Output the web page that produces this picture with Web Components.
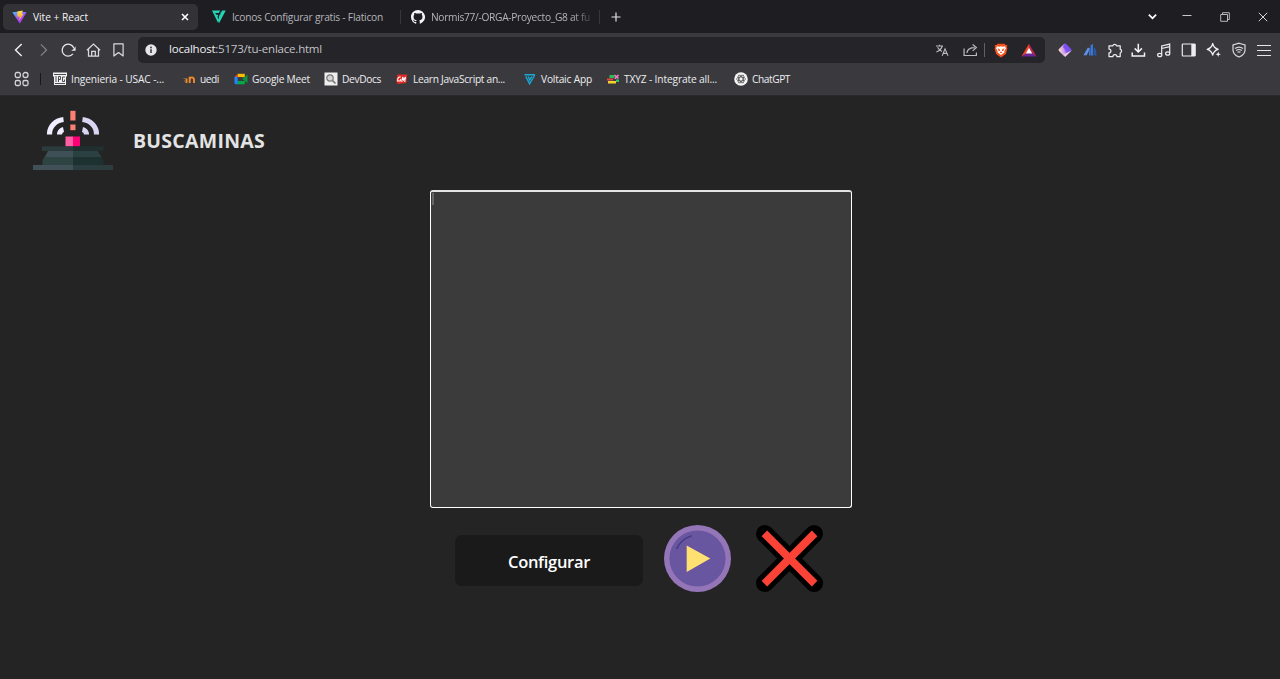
<!DOCTYPE html>
<html lang="es">
<head>
<meta charset="utf-8">
<title>Vite + React</title>
<style>
html,body{margin:0;height:100%;overflow:hidden;background:#242424}
body{font-family:"Open Sans","Noto Sans",sans-serif}
</style>
</head>
<body>
<browser-window></browser-window>
<script>
const ICONS = {
vite:['0 0 14 14','<defs><linearGradient id="a" x1="0" y1="0" x2=".6" y2="1"><stop offset="0" stop-color="#41c5ff"/><stop offset=".6" stop-color="#a450fa"/><stop offset="1" stop-color="#bd34fe"/></linearGradient><linearGradient id="b" x1="0" y1="0" x2="0" y2="1"><stop offset="0" stop-color="#ffe04a"/><stop offset="1" stop-color="#ff9a20"/></linearGradient></defs><path d="M.3 2.2 7 1.4l6.6.8L7.3 13.4z" fill="url(#a)"/><path d="M5 1.6 10 .5 9.3 4l1.4.1-4 6.3.4-3.9-2.2.3z" fill="url(#b)"/>'],
close:['0 0 10 10','<path d="M2 2l6 6M8 2L2 8" stroke="#fff" stroke-width="1.6"/>'],
flat:['0 0 14 14','<path d="M0 .5h8.3L6.8 3H3.2l1 1.8h2.1L5.5 7l1.5 3.2-.9 2.8zM10 .5h3.8L7 13.2 6.6 9z" fill="#25d3b5"/><path d="M9.2 1.3 6.6 7.6 8 8z" fill="#25d3b5"/>'],
github:['0 0 16 16','<path fill="#f4f4f6" d="M8 0C3.58 0 0 3.58 0 8c0 3.54 2.29 6.53 5.47 7.59.4.07.55-.17.55-.38v-1.49c-2.01.37-2.53-.49-2.69-.94-.09-.23-.48-.94-.82-1.13-.28-.15-.68-.52-.01-.53.63-.01 1.08.58 1.23.82.72 1.21 1.87.87 2.33.66.07-.52.28-.87.51-1.07-1.78-.2-3.64-.89-3.64-3.95 0-.87.31-1.59.82-2.15-.08-.2-.36-1.02.08-2.12 0 0 .67-.21 2.2.82a7.7 7.7 0 0 1 4 0c1.53-1.04 2.2-.82 2.2-.82.44 1.1.16 1.92.08 2.12.51.56.82 1.27.82 2.15 0 3.07-1.87 3.75-3.65 3.95.29.25.54.73.54 1.48v2.2c0 .21.15.46.55.38A8 8 0 0 0 8 0z"/>'],
plus:['0 0 10 10','<path d="M5 .5v9M.5 5h9" stroke="#e4e4e8" stroke-width="1.2"/>'],
chev:['0 0 10 10','<path d="M1.7 3.3 5 6.6l3.300-3.300" fill="none" stroke="#fff" stroke-width="1.6"/>'],
min:['0 0 10 10','<path d="M.5 3.500h9" stroke="#c8c8cc"/>'],
restore:['0 0 10 10','<path d="M.7 2.5h6.800v6.800H.7zM2.500 2.300V.7h6.800v6.800H7.700" fill="none" stroke="#c8c8cc" stroke-width=".9"/>'],
winclose:['0 0 10 10','<path d="M.8.800l8.400 8.400M9.200.800.800 9.200" stroke="#d8d8dc"/>'],
back:['0 0 16 16','<path d="M10.700 2 4.500 8l6.200 6" fill="none" stroke="#f0f0f2" stroke-width="1.400"/>'],
fwd:['0 0 16 16','<path d="M4.900 2.400 10.500 8l-5.600 5.600" fill="none" stroke="#808086" stroke-width="1.300"/>'],
reload:['0 0 16 16','<path d="M11.900 11.900A6 6 0 1 1 12.900 6.300" fill="none" stroke="#e8e8ea" stroke-width="1.300"/><path d="M14.600 4.300v4.500h-4.500c1.500-.8 3.200-2.200 4.500-4.500z" fill="#e8e8ea"/>'],
home:['0 0 16 16','<path d="M.900 8.200 7.500 2l6.600 6.200M2.500 7v7.200h10V7M5.700 14V9.300h3.600V14" fill="none" stroke="#dcdce0" stroke-width="1.250"/>'],
mark:['0 0 16 16','<path d="M2.900 1.800h9.200v12.200L7.500 10.500l-4.600 3.500z" fill="none" stroke="#dcdce0" stroke-width="1.200" stroke-linejoin="round"/>'],
info:['0 0 12 12','<circle cx="6" cy="6" r="5.700" fill="#e6e6ea"/><circle cx="6" cy="3.500" r=".9" fill="#333"/><path d="M6 5.300v3.600" stroke="#333" stroke-width="1.500"/>'],
trans:['0 0 14 14','<path d="M1 3h7M4.500 1.800V3M7.200 3.200C6.200 6 4 8 1.400 9M2.600 4.200C3.600 6.200 5.200 7.600 7 8.400M7.200 12.700 10 5.800l3 6.900M8.200 10.400h3.700" fill="none" stroke="#bcbcc2" stroke-width="1.100"/>'],
share:['0 0 14 14','<path d="M1 5.500v7h11.500V9.500M3.600 10C4 6.700 6.700 4.600 11 4.600M9 1.500l3.500 3.100L9 7.800" fill="none" stroke="#bcbcc2" stroke-width="1.100"/>'],
brave:['0 0 14 16','<path d="M3.500.8h7l1 1.200 1.800.2-.4 2 .5 1.600-1.500 6L7 15.400l-4.900-3.600-1.500-6 .5-1.600-.4-2L2.500 2z" fill="#f4511e"/><path d="M3 3.500 5.400 4 7 3.400l1.600.6 2.400-.5.9 2-1.600 3.400.3 1L7 12.800 3.400 9.900l.3-1L2.100 5.500z" fill="#fff"/><path d="m3.500 5.700 2 .8.7 1.800-1.300.5zM10.500 5.700l-2 .8-.7 1.800 1.300.5zM7 9l-1.400 1L7 11l1.400-1z" fill="#f4511e"/>'],
bat:['0 0 16 14','<path d="M8 .8 .4 13.400l5-2.600L8 5z" fill="#f2451f"/><path d="M8 .8 15.600 13.400l-5-2.600L8 5z" fill="#b5264f"/><path d="M.4 13.400h15.200l-5-3.100H5.400z" fill="#6b2499"/><path d="M8 4.800 11.200 10.600H4.800z" fill="#fff"/>'],
ext1:['0 0 16 16','<defs><linearGradient id="g" x1=".2" y1="1" x2=".8" y2="0"><stop offset="0" stop-color="#ffd9cf"/><stop offset=".4" stop-color="#c99be8"/><stop offset=".6" stop-color="#8a55f5"/><stop offset="1" stop-color="#6a45e8"/></linearGradient></defs><rect x="3" y="3" width="10" height="10" rx="1.500" transform="rotate(45 8 8)" fill="url(#g)"/><path d="M8 1.300 14.500 7.800 10 9.500 6 5z" fill="#7f4ff0"/><path d="M14.800 8.200 8.300 14.700 6.500 12.500z" fill="#e9c9e4"/>'],
ext2:['0 0 16 16','<path d="M1.500 13.300h3.200L8 6.500 5.900 5.500z" fill="#5c93e8"/><path d="M7 8.800 8.300 7v6.400H7z" fill="#3e75cf"/><path d="M8.600 3.200 10.900 2v11.400H8.600z" fill="#3b7ae0"/><path d="M11.600 5.500l1.500.8c.9 1.500 1.400 4 1.400 7.100h-2.900z" fill="#2857a4"/>'],
puzzle:['0 0 16 16','<path d="M2 3.800h3.800a2 2 0 0 1 3.800 0h3.600v3.400a2 2 0 0 1 0 3.800v3.500H9.900a2 2 0 0 0-4 0H2v-3.600a1.900 1.900 0 0 0 0-3.800z" fill="none" stroke="#eeeef0" stroke-width="1.250" stroke-linejoin="round"/>'],
down:['0 0 16 16','<path d="M7.300 1.700v8M3.700 6.400 7.300 10l3.600-3.600M1.200 10.500v3.500h12.300v-3.500" fill="none" stroke="#f4f4f6" stroke-width="1.500"/>'],
music:['0 0 16 16','<path d="M5.700 12.500V3.900l8-1.800v9M5.700 6.500l8-1.800" fill="none" stroke="#eeeef0" stroke-width="1.200"/><ellipse cx="3.700" cy="13" rx="2.100" ry="1.700" fill="none" stroke="#eeeef0" stroke-width="1.200"/><ellipse cx="11.700" cy="11.500" rx="2.100" ry="1.700" fill="none" stroke="#eeeef0" stroke-width="1.200"/>'],
side:['0 0 16 16','<rect x="1.300" y="2" width="12.800" height="12" rx=".8" fill="none" stroke="#eeeef0" stroke-width="1.200"/><path d="M10.300 2h4v12h-4z" fill="#eeeef0"/>'],
spark:['0 0 16 16','<path d="M6.700 1.500c.8 3.600 2.100 4.900 5.500 5.800-3.400.9-4.700 2.200-5.500 5.800C5.900 9.500 4.600 8.200 1.200 7.300 4.600 6.400 5.900 5.100 6.700 1.500z" fill="none" stroke="#f0f0f2" stroke-width="1.250" stroke-linejoin="round"/><path d="M12.200 9.500l.7 2 2 .7-2 .7-.7 2-.7-2-2-.7 2-.7z" fill="#f0f0f2"/>'],
vpn:['0 0 16 16','<path d="M8 1.200 14 3v5c0 3.200-2.400 5.600-6 7-3.600-1.400-6-3.800-6-7V3z" fill="none" stroke="#dcdce0" stroke-width="1.200"/><path d="M4 6.600q4-3 8 0M5.200 8.500q2.800-2 5.600 0M6.500 10.300q1.500-1 3 0" fill="none" stroke="#dcdce0" stroke-width="1.200"/>'],
menu:['0 0 16 16','<path d="M1 3.500h14M1 8.500h14M1 13.500h14" stroke="#e6e6ea" stroke-width="1.200"/>'],
apps:['0 0 16 16','<g fill="none" stroke="#d4d4d8" stroke-width="1.300"><rect x="1.300" y="1.500" width="5" height="5" rx="1.500"/><rect x="9" y="1.500" width="5" height="5" rx="2.300"/><rect x="1.300" y="9.500" width="5" height="5" rx="1.500"/><rect x="9" y="9.500" width="5" height="5" rx="1.500"/></g>'],
usac:['0 0 14 14','<path d="M0 .5h14v4h-1V13H1V4.500H0z" fill="#f2f2f2"/><path d="M1 2.500h12M3 4v6M5.500 10V4.500h2v3h-2M12 5H9.500v4.500h2v-2M2 11.500h10" fill="none" stroke="#3a3a3e" stroke-width=".9"/>'],
uedi:['0 0 14 14','<path d="M4.500 6.500V11M7.700 11V4.800M7.700 8c0-3.500 4.300-3.500 4.300 0v3" fill="none" stroke="#f18a2b" stroke-width="1.900"/><path d="M1.500 6.500H4M2 9h1.500" stroke="#8a6547"/>'],
meet:['0 0 14 14','<path d="M.5 5 3.800 1.800V5z" fill="#ea4335"/><path d="M3.800 1.800h7v3.400h-7z" fill="#fbbc04"/><path d="M.5 5h3.300v7.300H1.500l-1-1z" fill="#2684fc"/><path d="M3.800 9h7v3.300h-7z" fill="#00ac47"/><path d="M3.800 5.200h4.400V9H3.800z" fill="#3a3a3e"/><path d="M8.200 7 10.800 4.800 13.500 2.800v8.500L10.800 9z" fill="#0d9440"/>'],
devdocs:['0 0 14 14','<path d="M.5.500h13v13H.5z" fill="#eee"/><circle cx="6" cy="6" r="3.200" fill="#d4d4d4" stroke="#777" stroke-width="1.200"/><path d="m8.500 8.500 3 3" stroke="#777" stroke-width="1.700"/>'],
learn:['0 0 14 14','<path d="M2.500 2.500h9.700l-1 8.500-8.500 1-1.700-3z" fill="#e02a24"/><path d="M5.700 5C3 4.500 2.500 7 2.700 9L5.200 9l.6-2M6.700 10l1-5 .8 3 2-3-.8 5" fill="none" stroke="#fff" stroke-width="1.100"/>'],
voltaic:['0 0 14 14','<path d="M1.500 2.800h10.500M2.800 4.500l3.800 7.300 4.900-8.300M5.200 4.500l1.500 3.500 2-3.500" fill="none" stroke="#18a9d6" stroke-width="1.400"/>'],
txyz:['0 0 14 14','<path d="M3.500 3h5v3h-5z" fill="#29bb59"/><path d="M1 6.500h6v2H1z" fill="#e83f45"/><path d="M2 9h8v2.500H2z" fill="#f5d32d"/><path d="m8.500 3 4 3.500M12.500 3 8.800 6.800" stroke="#f07fc8" stroke-width="1.600"/><path d="M10 7.500h3V10h-3z" fill="#2fc75c"/>'],
gpt:['0 0 14 14','<circle cx="7" cy="7" r="6.800" fill="#f5f5f5"/><g fill="none" stroke="#444" stroke-width=".7"><ellipse cx="7" cy="7" rx="4.500" ry="2"/><ellipse cx="7" cy="7" rx="4.500" ry="2" transform="rotate(60 7 7)"/><ellipse cx="7" cy="7" rx="4.500" ry="2" transform="rotate(120 7 7)"/></g>'],
siren:['0 0 80 60','<g fill="none" stroke-width="5.200"><path d="M16.500 24.500A16 14.500 0 0 1 30.500 9.500" stroke="#efedff"/><path d="M49.500 9.500A16 14.500 0 0 1 63.500 24.500" stroke="#dad5f3"/><path d="M26.500 24.500A5 5 0 0 1 30.500 19.500" stroke="#efedff"/><path d="M49.500 19.500A5 5 0 0 1 53.500 24.500" stroke="#dad5f3"/></g><path d="M37.300.8h5.200v9.700h-5.200z" fill="#f98072"/><path d="M37.300 14.500h5.200v5.700h-5.200z" fill="#f98072"/><path d="M32.500 26.500H40v10h-7.500z" fill="#ff5fa4"/><path d="M40 26.500h7v10h-7z" fill="#ff0077"/><path d="M9 36.300h31v4.600H9z" fill="#2c3c3e"/><path d="M40 36.300h30.500v4.600H40z" fill="#203031"/><path d="M15 41h25v6.500H11.500zM40 41h24.500l4 6.500H40z" fill="#3f4f57"/><path d="M40 41h24.500l4 6.500H40z" fill="#2b4040"/><path d="M11.500 47H40v8H9.500v-5z" fill="#2e4443"/><path d="M40 47h28.500l2 3v5H40z" fill="#1e3131"/><path d="M0 55h40v5H0z" fill="#425158"/><path d="M40 55h40v5H40z" fill="#2c3d40"/>'],
play:['0 0 68 68','<circle cx="34" cy="34" r="34" fill="#9475b7"/><circle cx="34" cy="34" r="28.500" fill="#6956a1"/><path d="M13.200 23.800C16 17.500 20.300 13.200 27.500 11.100" fill="none" stroke="#493c83" stroke-width="1.700" stroke-linecap="round"/><path d="M23 20.700 47 34.100 23 47.700z" fill="#ffe071"/>'],
cross:['0 0 68 68','<path d="M9 9 59 59M59 9 9 59" stroke="#000" stroke-width="18" stroke-linecap="round"/><path d="M8.500 8.500 59.500 59.500M59.500 8.500 8.500 59.500" stroke="#fa4336" stroke-width="8"/>']
};
const define = (tag, markup, ready) => customElements.define(tag, class extends HTMLElement {
  constructor(){ super(); this.attachShadow({mode:'open'}); }
  connectedCallback(){
    if (this.shadowRoot.childNodes.length) return;
    const t = document.createElement('template');
    t.innerHTML = typeof markup === 'function' ? markup(this) : markup;
    this.shadowRoot.append(t.content.cloneNode(true));
    if (ready) ready(this);
  }
});

define('ui-icon', el => {
  const [box, art] = ICONS[el.getAttribute('name')];
  const w = el.getAttribute('w') || 16, h = el.getAttribute('h') || w;
  return `<style>:host{display:block;flex:none;width:${w}px;height:${h}px}svg{display:block}</style>
  <svg width="${w}" height="${h}" viewBox="${box}" preserveAspectRatio="none">${art}</svg>`;
});

// A one-line label whose tracking is adjusted to fill its "w" width.
define('ui-label', el => `<style>:host{display:block;flex:none;white-space:nowrap;width:${el.getAttribute('w')}px}span{display:inline-block}</style><span><slot></slot></span>`, el => {
  const s = el.shadowRoot.querySelector('span');
  const n = el.textContent.length;
  s.style.letterSpacing = (el.getAttribute('w') - s.getBoundingClientRect().width) / n + 'px';
});

define('browser-tab', `<style>
:host{display:flex;box-sizing:border-box;align-items:center;height:26px;padding:0 8px 0 9px;border-radius:5px;font-size:10.200px;color:#b5b5ba;gap:5px}
:host([active]){background:#333337;color:#f2f2f4}
::slotted([slot=end]){margin-left:auto}
</style><slot name="icon"></slot><slot></slot><slot name="end"></slot>`);

define('tab-strip', `<style>
:host{display:flex;align-items:center;height:33px;background:#1d1d22;padding-left:3px;box-sizing:border-box}
.sep{width:1px;height:14px;background:#36363c}
.fade{-webkit-mask-image:linear-gradient(90deg,#000 88%,#0003);mask-image:linear-gradient(90deg,#000 88%,#0003);width:160px}
.controls{display:flex;margin-left:auto;align-items:center;gap:28px;padding-right:12px}
</style>
<browser-tab active style="width:195px"><ui-icon slot="icon" name="vite" w="15" h="14"></ui-icon><ui-label w="55" style="margin-left:1px">Vite + React</ui-label><ui-icon slot="end" name="close" w="10"></ui-icon></browser-tab>
<browser-tab style="width:202px;padding-left:14px"><ui-icon slot="icon" name="flat" w="14"></ui-icon><ui-label w="151" style="margin-left:1px">Iconos Configurar gratis - Flaticon</ui-label></browser-tab>
<div class="sep"></div>
<browser-tab style="width:198px;padding-left:10px;gap:6px"><ui-icon slot="icon" name="github" w="14"></ui-icon><div class="fade"><ui-label w="159">Normis77/-ORGA-Proyecto_G8 at fu</ui-label></div></browser-tab>
<div class="sep"></div>
<ui-icon name="plus" w="10" style="margin-left:11px"></ui-icon>
<div class="controls"><ui-icon name="chev" w="11" style="margin-right:-4px"></ui-icon><ui-icon name="min" w="10"></ui-icon><ui-icon name="restore" w="10"></ui-icon><ui-icon name="winclose" w="10"></ui-icon></div>`);

define('address-bar', `<style>
:host{display:flex;align-items:center;box-sizing:border-box;width:907px;height:26px;background:#242429;border-radius:5px;padding:0 8px 0 7px;font-size:11.500px;line-height:16px;color:#c3c3c8}
.tools{display:flex;align-items:center;margin-left:auto}
.sep{width:1px;height:14px;background:#606066;margin:0 9px 0 6px}
ui-label{margin:0 0 2px 12px}
b{font-weight:400;color:#efeff2}
</style>
<ui-icon name="info" w="12"></ui-icon><ui-label w="153"><b>localhost</b>:5173/tu-enlace.html</ui-label>
<div class="tools"><ui-icon name="trans" w="14"></ui-icon><ui-icon name="share" w="15" h="14" style="margin-left:14px"></ui-icon><div class="sep"></div><ui-icon name="brave" w="14" h="15"></ui-icon><ui-icon name="bat" w="16" h="14" style="margin-left:13px"></ui-icon></div>`);

define('tool-bar', `<style>
:host{display:flex;align-items:center;height:34px;padding-left:6px}
.group{display:grid;justify-items:center;align-items:center}
.nav{grid-template-columns:repeat(5,25px);margin-right:7px}
.ext{grid-template-columns:repeat(9,24.850px);margin-left:7.500px}
</style>
<div class="group nav"><ui-icon name="back"></ui-icon><ui-icon name="fwd"></ui-icon><ui-icon name="reload"></ui-icon><ui-icon name="home"></ui-icon><ui-icon name="mark"></ui-icon></div>
<address-bar></address-bar>
<div class="group ext">${['ext1','ext2','puzzle','down','music','side','spark','vpn','menu'].map(n=>`<ui-icon name="${n}"></ui-icon>`).join('')}</div>`);

define('bookmark-item', el => `<style>
:host{display:flex;align-items:center;gap:4px;flex:none}
</style><ui-icon name="${el.getAttribute('icon')}" w="14"></ui-icon><ui-label w="${el.getAttribute('w')}">${el.getAttribute('label')}</ui-label>`);

define('bookmark-bar', `<style>
:host{display:flex;align-items:center;height:24px;padding-left:14px;font-size:10.200px;color:#ededf0}
.sep{width:1px;height:12px;background:#18181b;margin:0 12px 0 10px}
</style>
<ui-icon name="apps" w="16"></ui-icon><div class="sep"></div>
${[['usac','Ingenieria - USAC -...',93,18],['uedi','uedi',19,15],['meet','Google Meet',58,14],['devdocs','DevDocs',39,14],['learn','Learn JavaScript an...',92,18],['voltaic','Voltaic App',51,14],['txyz','TXYZ - Integrate all...',93,17],['gpt','ChatGPT',38,0]].map(b=>`<bookmark-item icon="${b[0]}" label="${b[1]}" w="${b[2]}" style="margin-right:${b[3]}px"></bookmark-item>`).join('')}`);

define('game-header', `<style>
:host{display:flex;align-items:center;gap:20px;padding:14px 0 0 33px}
h1{margin:2px 0 0;font:700 19.500px/28px "Open Sans","Noto Sans",sans-serif;color:#e3e3e3}
</style><ui-icon name="siren" w="80" h="60"></ui-icon><h1><ui-label w="132">BUSCAMINAS</ui-label></h1>`);

define('code-area', `<style>
:host{display:block;box-sizing:border-box;width:422px;height:318px;margin:20px 0 0 430px;border:1px solid #fff;border-top:2px solid #e4e4e4;border-radius:3px;background:#3b3b3b;padding:1px}
i{display:block;width:2px;height:12px;background:#666}
</style><i></i>`);

define('game-actions', `<style>
:host{display:flex;padding:17px 0 0 455px}
button{display:flex;align-items:center;justify-content:center;box-sizing:border-box;width:188px;height:51px;margin:10px 21px 0 0;padding:2px 0 0;border:0;border-radius:7px;background:#1a1a1a;color:#fff;font:600 16.500px/24px "Open Sans","Noto Sans",sans-serif}
ui-icon+ui-icon{margin-left:25px}
</style><button><ui-label w="82">Configurar</ui-label></button><ui-icon name="play" w="67"></ui-icon><ui-icon name="cross" w="67"></ui-icon>`);

define('browser-window', `<style>
:host{display:flex;flex-direction:column;height:679px;width:1280px;overflow:hidden;background:#242424}
.chrome{background:#3a3a3e;height:96px;box-sizing:border-box;border-bottom:1px solid #29292c}
main{flex:1}
</style>
<div class="chrome"><tab-strip></tab-strip><tool-bar></tool-bar><bookmark-bar></bookmark-bar></div>
<main><game-header></game-header><code-area></code-area><game-actions></game-actions></main>`);
</script>
</body>
</html>
